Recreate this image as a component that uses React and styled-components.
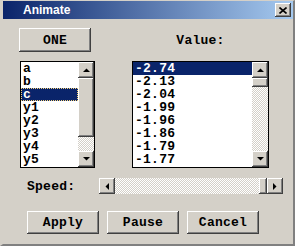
import styled, { createGlobalStyle } from 'styled-components';

const GlobalStyle = createGlobalStyle`
    html, body {
        margin: 0;
        padding: 0;
        background: #d4d0c8;
    }
`;

const face = '#d4d0c8';
const checker = `
    background-color: ${face};
    background-image: repeating-conic-gradient(#ffffff 0 25%, ${face} 0 50%);
    background-size: 2px 2px;
`;
const raised = `
    background: ${face};
    box-shadow: inset -1px -1px #404040, inset 1px 1px #ffffff, inset -2px -2px #808080, inset 2px 2px ${face};
`;

const Window = styled.div`
    width: 295px;
    height: 246px;
    box-sizing: border-box;
    border-left: 3px solid ${face};
    border-top: 1px solid ${face};
    border-right: 2px solid #808080;
    border-bottom: 2px solid #808080;
    display: flex;
    flex-direction: column;
    font-family: "Liberation Mono", "DejaVu Sans Mono", monospace;
    font-weight: bold;
    font-size: 13px;
    letter-spacing: 0.25px;
    color: #000;
`;

const TitleBar = styled.div`
    height: 18px;
    background: linear-gradient(to right, #0a246a, #a6caf0);
    display: flex;
    align-items: center;
    padding: 0 2px 0 20px;
`;

const Title = styled.span`
    flex: 1;
    color: #fff;
    font-family: "Liberation Sans", "DejaVu Sans", sans-serif;
    font-size: 12px;
    font-weight: bold;
    letter-spacing: 0;
`;

const CloseButton = styled.div`
    ${raised}
    width: 16px;
    height: 14px;
    display: flex;
    align-items: center;
    justify-content: center;
`;

const Content = styled.div`
    flex: 1;
    padding: 9px 0 0 16px;
    display: flex;
    flex-direction: column;
`;

const Grid = styled.div`
    display: grid;
    grid-template-columns: 113px 137px;
    grid-template-rows: 24px 107px;
    row-gap: 9px;
`;

const Button = styled.div`
    ${raised}
    width: ${p => p.w || 72}px;
    height: ${p => p.h || 23}px;
    display: flex;
    align-items: center;
    justify-content: center;
    line-height: 1;
`;

const Label = styled.div`
    display: flex;
    align-items: center;
    justify-content: ${p => p.center ? 'center' : 'flex-start'};
    padding-left: ${p => p.pad || 0}px;
    padding-top: ${p => p.top || 0}px;
`;

const ListBox = styled.div`
    width: ${p => p.w}px;
    height: 107px;
    margin-left: ${p => p.ml || 0}px;
    box-sizing: border-box;
    border: 1px solid #000;
    background: #fff;
    display: flex;
`;

const Items = styled.div`
    flex: 1;
    display: flex;
    flex-direction: column;
    overflow: hidden;
`;

const Item = styled.div`
    height: 13px;
    line-height: 13px;
    padding-left: 2px;
    box-sizing: border-box;
    white-space: pre;
    overflow: hidden;
    background: ${p => p.selected ? '#0a246a' : 'transparent'};
    color: ${p => p.selected ? '#fff' : '#000'};
    outline: ${p => p.focus ? '1px dotted #f5d27a' : 'none'};
    outline-offset: -1px;
`;

const VScroll = styled.div`
    width: 16px;
    display: flex;
    flex-direction: column;
`;

const HScroll = styled.div`
    width: 184px;
    height: 16px;
    display: flex;
`;

const ArrowBtn = styled.div`
    ${raised}
    width: 16px;
    height: 16px;
    flex: none;
    display: flex;
    align-items: center;
    justify-content: center;
`;

const Thumb = styled.div`
    ${raised}
    flex: none;
    width: ${p => p.w ? p.w + 'px' : 'auto'};
    height: ${p => p.h ? p.h + 'px' : 'auto'};
`;

const Track = styled.div`
    flex: 1;
    ${checker}
`;

const SpeedRow = styled.div`
    display: flex;
    align-items: center;
    margin-top: 10px;
    padding-left: 8px;
`;

const SpeedLabel = styled.div`
    width: 72px;
`;

const ButtonRow = styled.div`
    display: flex;
    gap: 8px;
    margin-top: 17px;
    padding-left: 8px;
`;

const Arrow = ({ dir }) => {
    const pts = {
        up: '0,4 7,4 3.5,0.5',
        down: '0,0 7,0 3.5,3.5',
        left: '4,0 4,7 0.5,3.5',
        right: '0,0 0,7 3.5,3.5',
    }[dir];
    const vertical = dir === 'up' || dir === 'down';
    return (
        <svg width={vertical ? 7 : 4} height={vertical ? 4 : 7}>
            <polygon points={pts} fill="#000" />
        </svg>
    );
};

const leftItems = ['a', 'b', 'c', 'y1', 'y2', 'y3', 'y4', 'y5'];
const values = ['-2.74', '-2.13', '-2.04', '-1.99', '-1.96', '-1.86', '-1.79', '-1.77'];

function App() {
    return (
        <>
            <GlobalStyle />
            <Window>
                <TitleBar>
                    <Title>Animate</Title>
                    <CloseButton>
                        <svg width="8" height="7">
                            <path d="M0.5 0.5 L7.5 6.5 M7.5 0.5 L0.5 6.5" stroke="#000" strokeWidth="1.6" />
                        </svg>
                    </CloseButton>
                </TitleBar>
                <Content>
                    <Grid>
                        <Button w={72} h={24}>ONE</Button>
                        <Label center top={1}>Value:</Label>
                        <ListBox w={75} ml={1}>
                            <Items>
                                {leftItems.map((t, i) => (
                                    <Item key={t} selected={i === 2} focus={i === 2}>{t}</Item>
                                ))}
                            </Items>
                            <VScroll>
                                <ArrowBtn><Arrow dir="up" /></ArrowBtn>
                                <Thumb h={59} />
                                <Track />
                                <ArrowBtn><Arrow dir="down" /></ArrowBtn>
                            </VScroll>
                        </ListBox>
                        <ListBox w={137}>
                            <Items>
                                {values.map((t, i) => (
                                    <Item key={t} selected={i === 0}>{t}</Item>
                                ))}
                            </Items>
                            <VScroll>
                                <ArrowBtn><Arrow dir="up" /></ArrowBtn>
                                <Thumb h={9} />
                                <Track />
                                <ArrowBtn><Arrow dir="down" /></ArrowBtn>
                            </VScroll>
                        </ListBox>
                    </Grid>
                    <SpeedRow>
                        <SpeedLabel>Speed:</SpeedLabel>
                        <HScroll>
                            <ArrowBtn><Arrow dir="left" /></ArrowBtn>
                            <Track />
                            <Thumb w={8} />
                            <ArrowBtn><Arrow dir="right" /></ArrowBtn>
                        </HScroll>
                    </SpeedRow>
                    <ButtonRow>
                        <Button>Apply</Button>
                        <Button>Pause</Button>
                        <Button>Cancel</Button>
                    </ButtonRow>
                </Content>
            </Window>
        </>
    );
}

export default App;
